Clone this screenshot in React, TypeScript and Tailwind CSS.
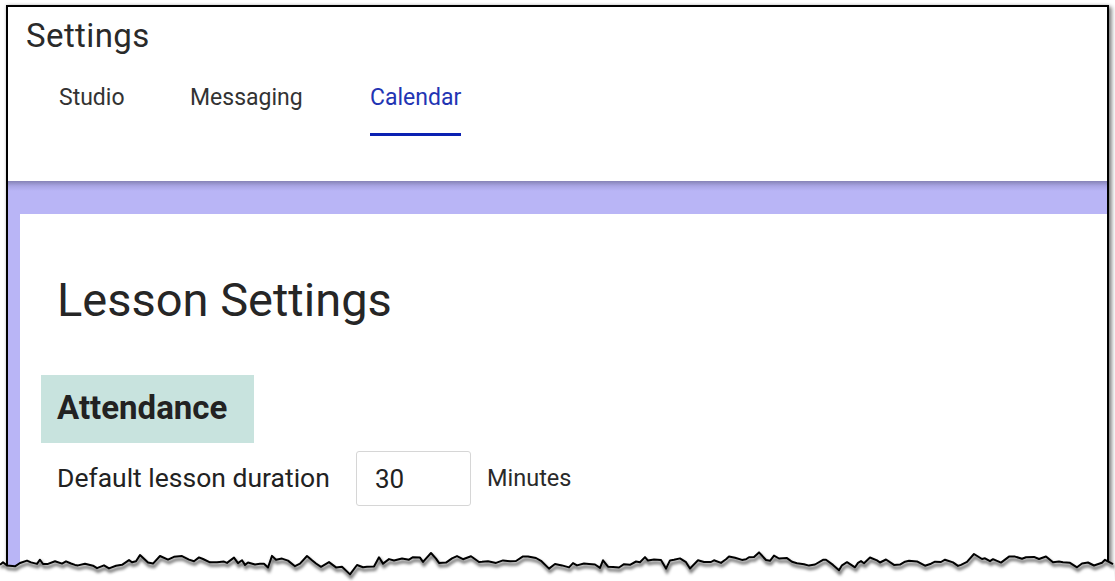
import React from "react";

const edge = (() => {
  let s = 11;
  const r = () => {
    s = (s * 9301 + 49297) % 233280;
    return s / 233280;
  };
  const arr: [number, number][] = [];
  for (let x = 0; x <= 1115; x += 3 + Math.floor(r() * 6)) {
    const y =
      32 +
      2.5 * Math.sin(x / 43) +
      2 * Math.sin(x / 19 + 2) +
      (r() - 0.5) * 6 +
      (r() > 0.93 ? 5 : 0) -
      (r() > 0.93 ? 4 : 0);
    arr.push([x, y]);
  }
  return arr;
})();

function TornEdge() {
  const line = edge.map(([x, y]) => `${x},${y.toFixed(1)}`).join(" ");
  const shadow = edge.map(([x, y]) => `${x + 1},${(y + 3).toFixed(1)}`).join(" ");
  const poly = `${line} 1115,51 0,51`;
  return (
    <svg
      className="absolute left-0 top-[530px]"
      width="1115"
      height="51"
      viewBox="0 0 1115 51"
    >
      <defs>
        <filter id="blur" x="-5%" y="-50%" width="110%" height="200%">
          <feGaussianBlur stdDeviation="1.6" />
        </filter>
      </defs>
      <polygon points={poly} fill="#ffffff" />
      <polyline
        points={shadow}
        fill="none"
        stroke="rgba(0,0,0,0.55)"
        strokeWidth="3"
        filter="url(#blur)"
      />
      <polyline points={line} fill="none" stroke="#000" strokeWidth="2" strokeLinejoin="round" />
    </svg>
  );
}

export default function App() {
  return (
    <div className="relative w-[1115px] h-[581px] overflow-hidden bg-white font-['Roboto',sans-serif] text-[#262626]">
      <div className="pl-[6px] pt-[5px]">
        <div className="w-[1103px] h-[600px] border-2 border-black shadow-[3px_2px_4px_rgba(0,0,0,0.45),0_0_3px_rgba(0,0,0,0.2)] flex flex-col">
          {/* header */}
          <div className="h-[174px] bg-white flex flex-col">
            <div className="pl-[18px] pt-[12px] text-[33px] leading-none tracking-[0.4px] text-[#2a2a2a]">Settings</div>
            <div className="flex pl-[51px] pt-[34px] text-[23px] leading-none">
              <div className="w-[131px] text-[#333]">Studio</div>
              <div className="w-[180px] text-[#333]">Messaging</div>
              <div className="text-[#2234b3] border-b-[3px] border-[#0b21b2] pb-[24px]">Calendar</div>
            </div>
          </div>
          {/* content */}
          <div className="flex-1 pl-[12px] pt-[33px] bg-[linear-gradient(to_bottom,#8683b6_0px,#a9a5e4_5px,#b9b5f6_10px,#b9b5f6_100%)]">
            <div className="h-full bg-white px-[21px] pt-[62px]">
              <h1 className="ml-[16px] text-[47px] leading-none font-normal text-[#262626]">Lesson Settings</h1>
              <div className="mt-[52px] w-[213px] h-[68px] bg-[#c8e3de] pl-[16px] pt-[16px] text-[33px] leading-none font-bold text-[#222]">
                Attendance
              </div>
              <div className="mt-[8px] flex items-center">
                <div className="ml-[16px] w-[299px] text-[26.5px] leading-none text-[#222]">Default lesson duration</div>
                <div className="w-[115px] h-[55px] border border-[#d6d6d6] rounded-[3px] flex items-center pl-[18px] text-[26px] leading-none text-[#222]">
                  30
                </div>
                <div className="ml-[16px] text-[23.5px] leading-none text-[#2a2a2a]">Minutes</div>
              </div>
            </div>
          </div>
        </div>
      </div>
      <TornEdge />
    </div>
  );
}
